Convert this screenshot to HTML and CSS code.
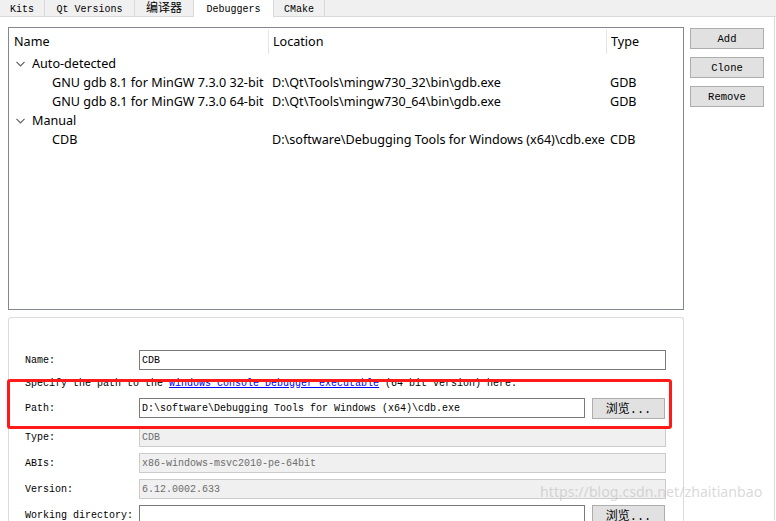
FILE: index.html
```
<!DOCTYPE html>
<html>
<head>
<meta charset="utf-8">
<link rel="stylesheet" href="styles.css">
</head>
<body>
<div class="tabbar">
  <div class="tab t-kits">Kits</div>
  <div class="tab t-qt">Qt Versions</div>
  <div class="tab t-cc cjk">编译器</div>
  <div class="tab t-dbg active">Debuggers</div>
  <div class="tab t-cm">CMake</div>
</div>
<div class="pane">
  <div class="toprow">
    <div class="tree">
      <div class="thead">
        <div class="th c1">Name</div>
        <div class="th c2">Location</div>
        <div class="th c3">Type</div>
      </div>
      <div class="row lvl0"><svg class="chev" width="9" height="6" viewBox="0 0 9 6"><polyline points="0.5,0.8 4.5,4.8 8.5,0.8" fill="none" stroke="#606060" stroke-width="1.2"/></svg><span>Auto-detected</span></div>
      <div class="row lvl1"><div class="c1">GNU gdb 8.1 for MinGW 7.3.0 32-bit</div><div class="c2">D:\Qt\Tools\mingw730_32\bin\gdb.exe</div><div class="c3">GDB</div></div>
      <div class="row lvl1"><div class="c1">GNU gdb 8.1 for MinGW 7.3.0 64-bit</div><div class="c2">D:\Qt\Tools\mingw730_64\bin\gdb.exe</div><div class="c3">GDB</div></div>
      <div class="row lvl0"><svg class="chev" width="9" height="6" viewBox="0 0 9 6"><polyline points="0.5,0.8 4.5,4.8 8.5,0.8" fill="none" stroke="#606060" stroke-width="1.2"/></svg><span>Manual</span></div>
      <div class="row lvl1"><div class="c1">CDB</div><div class="c2">D:\software\Debugging Tools for Windows (x64)\cdb.exe</div><div class="c3">CDB</div></div>
    </div>
    <div class="buttons">
      <div class="btn">Add</div>
      <div class="btn">Clone</div>
      <div class="btn">Remove</div>
    </div>
  </div>
  <div class="group">
    <div class="frow r-name"><div class="lbl">Name:</div><div class="inp wide">CDB</div></div>
    <div class="hint">Specify the path to the <span class="link">Windows Console Debugger executable</span> (64 bit version) here.</div>
    <div class="frow r-path"><div class="lbl">Path:</div><div class="inp narrow">D:\software\Debugging Tools for Windows (x64)\cdb.exe</div><div class="btn browse cjk">浏览...</div></div>
    <div class="frow r-type"><div class="lbl">Type:</div><div class="inp wide dis">CDB</div></div>
    <div class="frow r-abi"><div class="lbl">ABIs:</div><div class="inp wide dis">x86-windows-msvc2010-pe-64bit</div></div>
    <div class="frow r-ver"><div class="lbl">Version:</div><div class="inp wide dis">6.12.0002.633</div></div>
    <div class="frow r-wd"><div class="lbl">Working directory:</div><div class="inp narrow"></div><div class="btn browse cjk">浏览...</div></div>
  </div>
</div>
<div class="redbox"></div>
<div class="watermark">https://blog.csdn.net/zhaitianbao</div>
</body>
</html>
```
FILE: styles.css
```
html, body {
  margin: 0;
  padding: 0;
  background: #ffffff;
  width: 776px;
  height: 521px;
  overflow: hidden;
  position: relative;
}
body {
  font-family: "Liberation Mono", "DejaVu Sans Mono", "Noto Sans CJK SC", monospace;
  font-size: 10px;
  color: #000;
}
.tabbar {
  display: flex;
  height: 17px;
  background: #f0f0f0;
  border-bottom: 1px solid #d9d9d9;
  box-sizing: border-box;
}
.tab {
  height: 17px;
  box-sizing: border-box;
  border: 1px solid #d9d9d9;
  border-left: none;
  border-top: none;
  background: #f0f0f0;
  display: flex;
  align-items: center;
  justify-content: center;
  font-size: 10px;
  line-height: 12px;
  padding-top: 3px;
}
.cjk { font-family: "Liberation Mono", "Noto Sans CJK SC", monospace; }
.t-cc { font-size: 12px; padding-top: 1px; }
.t-kits { width: 45px; }
.t-qt { width: 90px; }
.t-cc { width: 59px; }
.t-dbg { width: 80px; }
.t-cm { width: 51px; }
.tab.active {
  background: #ffffff;
  border-bottom: 1px solid #ffffff;
  height: 18px;
  padding-top: 2px;
}
.pane {
  width: 775px;
  height: 503px;
  border-right: 1px solid #d9d9d9;
  box-sizing: border-box;
}
.toprow {
  display: flex;
  padding: 10px 0 0 8px;
}
.tree {
  width: 676px;
  height: 283px;
  border: 1px solid #828790;
  box-sizing: border-box;
  padding-top: 1px;
  font-family: "Noto Sans", "Noto Sans CJK SC", sans-serif;
  font-size: 12.6px;
  color: #000;
}
.thead {
  display: flex;
  height: 25px;
  align-items: center;
}
.th { height: 24px; line-height: 24px; box-sizing: border-box; }
.c1 { width: 260px; }
.c2 { width: 338px; }
.c3 { width: 70px; }
.thead .c1 { width: 260px; padding-left: 5px; border-right: 1px solid #e5e5e5; }
.thead .c2 { width: 338px; padding-left: 4px; border-right: 1px solid #e5e5e5; }
.thead .c3 { padding-left: 4px; }
.row {
  display: flex;
  align-items: center;
  height: 19px;
  white-space: nowrap;
}
.row.lvl0 { padding-left: 7px; }
.chev { margin-right: 7px; margin-top: 1px; }
.row.lvl1 .c1 { padding-left: 43px; width: 260px; box-sizing: border-box; }
.row.lvl1 .c2 { padding-left: 3px; width: 338px; box-sizing: border-box; }
.row.lvl1 .c3 { padding-left: 3px; }
.buttons {
  display: flex;
  flex-direction: column;
  gap: 8px;
  margin-left: 6px;
  padding-top: 1px;
}
.btn {
  width: 74px;
  height: 21px;
  box-sizing: border-box;
  background: #e1e1e1;
  border: 1px solid #adadad;
  display: flex;
  align-items: center;
  justify-content: center;
  font-size: 10.5px;
}
.group {
  margin: 7px 0 0 8px;
  width: 676px;
  height: 220px;
  border: 1px solid #dcdcdc;
  border-bottom: none;
  border-radius: 3px 3px 0 0;
  box-sizing: border-box;
  padding: 32px 0 0 16px;
}
.frow {
  display: flex;
  align-items: center;
  height: 20px;
}
.lbl {
  width: 114px;
  flex: none;
}
.inp {
  height: 20px;
  box-sizing: border-box;
  border: 1px solid #7a7a7a;
  background: #fff;
  padding-left: 2px;
  display: flex;
  align-items: center;
  white-space: nowrap;
}
.inp.wide { width: 527px; }
.inp.narrow { width: 446px; }
.inp.dis {
  background: #f0f0f0;
  border-color: #cccccc;
  color: #6d6d6d;
}
.btn.browse {
  margin-left: 7px;
  width: 73px;
  font-size: 12px;
}
.hint {
  height: 14px;
  line-height: 14px;
  margin-top: 7px;
  white-space: nowrap;
}
.link { color: #0000ff; text-decoration: underline; }
.r-path { margin-top: 7px; }
.r-type { margin-top: 9px; }
.r-abi { margin-top: 6px; }
.r-ver { margin-top: 6px; }
.r-wd { margin-top: 6px; }
.redbox {
  position: absolute;
  left: 7px;
  top: 379px;
  width: 659px;
  height: 44px;
  border: 3px solid #ff1a1a;
  border-radius: 3px;
}
.watermark {
  position: absolute;
  left: 540px;
  top: 482px;
  font-family: "Noto Sans", sans-serif;
  font-size: 14.2px;
  color: rgba(185, 185, 185, 0.55);
  white-space: nowrap;
}
```
